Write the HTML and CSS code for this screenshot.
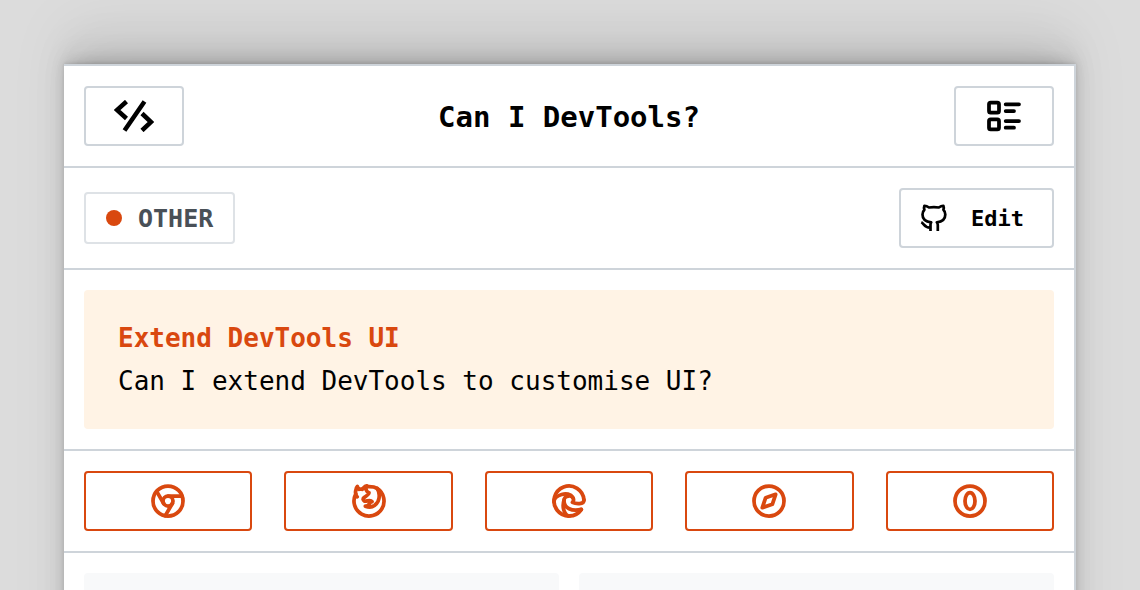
FILE: index.html
```html
<!DOCTYPE html>
<html lang="en">
<head>
<meta charset="utf-8">
<meta name="viewport" content="width=device-width, initial-scale=1">
<title>Can I DevTools?</title>
<link rel="stylesheet" href="styles.css">
</head>
<body>
<main class="card">
  <header class="row bar">
    <a class="button square" href="#home" aria-label="Home">
      <svg class="logo" viewBox="0 0 40 32" aria-hidden="true"><path d="M12.500 1.500 3 10 12.500 18.500M30.500 1.500 10.500 30.500M28 13.500 37 22 28 30.500"/></svg>
    </a>
    <h1 class="title">Can I DevTools?</h1>
    <button class="button square" type="button" aria-label="All tips">
      <svg class="icon" viewBox="0 0 24 24" aria-hidden="true"><path d="M13 5h8M13 9h5M13 15h8M13 19h5"/><rect x="3" y="4" width="6" height="6" rx="1"/><rect x="3" y="14" width="6" height="6" rx="1"/></svg>
    </button>
  </header>
  <section class="row bar">
    <span class="tag"><span class="dot"></span>OTHER</span>
    <a class="button edit" href="#edit">
      <svg class="github" viewBox="0 0 28 30" aria-hidden="true"><path d="M11.500 28V21.500C11.500 20.500 11.700 19.900 12.200 19.300C7 18.800 3.500 16.300 3.500 11.500C3.500 9.500 4.200 8 5.400 6.800C4.800 5.200 4.900 4 5.400 2.800C7 2.700 8.600 3.500 10 4.500C13.300 3.900 16.500 3.900 19.800 4.500C21.200 3.500 22.800 2.700 24.400 2.800C24.900 4 25 5.200 24.400 6.800C25.600 8 26.300 9.500 26.300 11.500C26.300 16.300 22.800 18.800 17.800 19.300C18.600 20 18.800 20.800 18.800 22V28M2.300 19.300C5 20.500 5.500 25 11.300 24.700"/></svg>
      Edit
    </a>
  </section>
  <section class="row">
    <div class="callout">
      <h2 class="callout-title">Extend DevTools UI</h2>
      <p class="callout-text">Can I extend DevTools to customise UI?</p>
    </div>
  </section>
  <nav class="row browsers" aria-label="Browsers">
    <button class="button browser" type="button" aria-label="Chrome">
      <svg class="icon" viewBox="0 0 24 24" aria-hidden="true"><circle cx="12" cy="12" r="9"/><circle cx="12" cy="12" r="3"/><path d="M12 9h8.400M14.598 13.500l-4.200 7.275M9.402 13.500l-4.200-7.275"/></svg>
    </button>
    <button class="button browser" type="button" aria-label="Firefox">
      <svg class="icon" viewBox="0 0 24 24" aria-hidden="true"><path d="M4.028 7.820a9 9 0 1 0 12.823-3.400c-1.636-1.020-3.064-1.020-4.851-1.020h-1.647"/><path d="M4.914 9.485c-1.756-1.569-.805-5.380.109-6.170.086.896.585 1.208 1.111 1.685.880-.275 1.313-.282 1.867 0 .820-.910 1.694-2.354 2.628-2.093-1.082 1.741-.070 3.733 1.371 4.173-.170.975-1.484 1.913-2.760 2.686-1.296.938-.722 1.850 0 2.234.949.506 3.611-.995 4.545.354-1.698.102-1.536 3.107-3.983 2.727 2.523.957 4.345.462 5.458-.340 1.965-1.520 2.879-3.542 2.879-5.557-.014-1.398.194-2.695-1.260-4.750"/></svg>
    </button>
    <button class="button browser" type="button" aria-label="Edge">
      <svg class="icon" viewBox="0 0 24 24" aria-hidden="true"><path d="M20.978 11.372a9 9 0 1 0-1.593 5.773"/><path d="M20.978 11.372c.210 2.993-5.034 2.413-6.913 1.486 1.392-1.600.402-4.038-2.274-3.851-1.745.122-2.927 1.157-2.784 3.202.280 3.990 4.444 6.205 10.360 4.790"/><path d="M3.022 12.628c-.283-4.043 8.717-7.228 11.248-2.688M12.628 20.978c-2.993.210-5.162-4.725-3.567-9.748"/></svg>
    </button>
    <button class="button browser" type="button" aria-label="Safari">
      <svg class="icon" viewBox="0 0 24 24" aria-hidden="true"><circle cx="12" cy="12" r="9"/><path d="M8 16l2-6 6-2-2 6-6 2"/></svg>
    </button>
    <button class="button browser" type="button" aria-label="Opera">
      <svg class="icon" viewBox="0 0 24 24" aria-hidden="true"><circle cx="12" cy="12" r="9"/><ellipse cx="12" cy="12" rx="3" ry="5"/></svg>
    </button>
  </nav>
  <section class="row panels">
    <div class="panel"></div>
    <div class="panel"></div>
  </section>
</main>
</body>
</html>
```
FILE: styles.css
```css
* {
  box-sizing: border-box;
}

body {
  margin: 0;
  height: 100vh;
  padding: 64px 64px 0;
  overflow: hidden;
  background: #dcdcdc;
  color: #000;
  font-family: "DejaVu Sans Mono", monospace;
}

.card {
  border-top: 2px solid #ced4da;
  border-right: 2px solid #ced4da;
  background: #fff;
  box-shadow:
    0 -1px 3px rgba(0, 0, 0, 0.1),
    0 -4px 12px -2px rgba(0, 0, 0, 0.12),
    0 -12px 24px -4px rgba(0, 0, 0, 0.1),
    0 -24px 40px -4px rgba(0, 0, 0, 0.06),
    0 -40px 60px rgba(0, 0, 0, 0.06);
}

.row {
  padding: 20px;
  border-bottom: 2px solid #ced4da;
}

.bar {
  display: flex;
  align-items: center;
  justify-content: space-between;
}

.title,
.callout-title,
.callout-text {
  margin: 0;
}

.title {
  padding-top: 2px;
  font-size: 29px;
  line-height: 40px;
}

.button {
  display: flex;
  align-items: center;
  justify-content: center;
  height: 60px;
  padding: 0;
  border: 2px solid #ced4da;
  border-radius: 4px;
  background: #fff;
  color: #000;
  font-family: inherit;
  text-decoration: none;
  cursor: pointer;
}

.square {
  width: 100px;
}

svg {
  fill: none;
  stroke: currentColor;
  stroke-linecap: round;
  stroke-linejoin: round;
}

.icon {
  width: 40px;
  height: 40px;
  stroke-width: 2.25;
}

.logo {
  width: 40px;
  height: 32px;
  stroke-width: 4.5;
  stroke-linecap: butt;
  stroke-linejoin: miter;
}

.github {
  width: 28px;
  height: 30px;
  stroke-width: 2.7;
  stroke-linecap: butt;
}

.tag {
  display: flex;
  align-items: center;
  gap: 16px;
  height: 52px;
  padding: 0 20px;
  border: 2px solid #dee2e6;
  border-radius: 4px;
  color: #495057;
  font-size: 25px;
  font-weight: 700;
}

.dot {
  width: 16px;
  height: 16px;
  border-radius: 50%;
  background: #d9480f;
}

.edit {
  gap: 24px;
  padding: 0 28px 0 18px;
  font-size: 22px;
  font-weight: 700;
}

.callout {
  padding: 27px 34px 26px;
  border-radius: 4px;
  background: #fff3e5;
  font-size: 26px;
  line-height: 43px;
}

.callout-title {
  color: #d9480f;
  font-size: 26px;
}

.browsers {
  display: grid;
  grid-template-columns: repeat(5, 1fr);
  gap: 32px;
}

.browser {
  border-color: #d9480f;
  color: #d9480f;
}

.panels {
  display: grid;
  grid-template-columns: 1fr 1fr;
  gap: 20px;
}

.panel {
  min-height: 120px;
  border-radius: 4px;
  background: #f8f9fa;
}
```
